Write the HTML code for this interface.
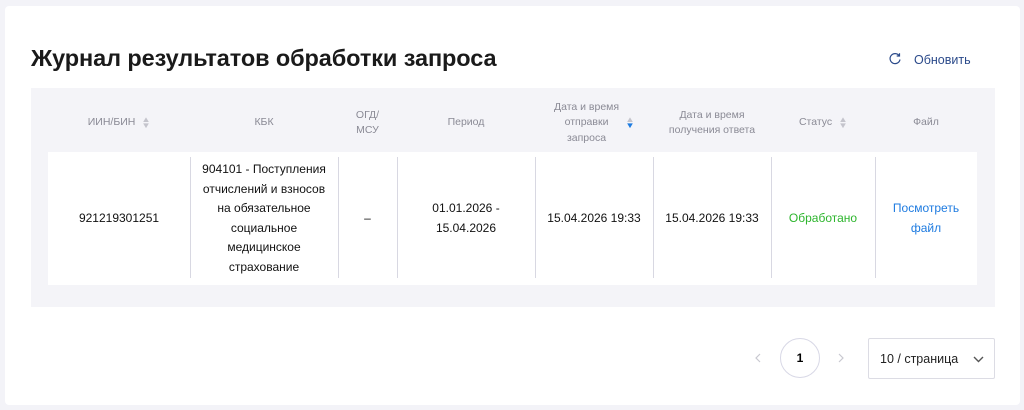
<!DOCTYPE html>
<html><head><meta charset="utf-8"><style>
*{margin:0;padding:0;box-sizing:border-box}
body{width:1024px;height:410px;background:#f3f3f8;font-family:"Liberation Sans",sans-serif;position:relative;overflow:hidden}
.card{position:absolute;left:5px;top:6px;width:1015px;height:399px;background:#fff;border-radius:4px}
h1{position:absolute;left:31px;top:45px;font-size:23.5px;font-weight:bold;color:#1a1a1a;letter-spacing:-0.1px}
.ref{position:absolute;left:888px;top:51px;font-size:12.5px;color:#2b4a8a}
.ref svg{position:absolute;left:0;top:1px}
.ref span{position:absolute;left:26px;top:2px;white-space:nowrap}
.tbl{position:absolute;left:31px;top:88px;width:964px;height:219px;background:#f4f4f8}
.row{position:absolute;left:48px;top:152px;width:929px;height:133px;background:#fff}
.c{position:absolute;text-align:center;display:flex;align-items:center;justify-content:center}
.h{font-size:10.5px;color:#8a8a95;line-height:15.5px;top:94px;height:58px}
.d{font-size:12px;color:#111;line-height:19.5px;top:152px;height:133px}
.div{position:absolute;top:157px;height:121px;width:1px;background:#d8d8e2}
.s{display:inline-block;margin-left:7px;font-size:8px;line-height:6px;color:#c4c4cc;transform:scaleX(1.2)}
.pg{position:absolute;top:338px;width:40px;height:40px;border:1px solid #d8d8e6;border-radius:50%;left:780px;font-size:12px;font-weight:bold;display:flex;align-items:center;justify-content:center}
.sel{position:absolute;left:868px;top:338px;width:127px;height:41px;border:1px solid #dcdce4;border-radius:2px;font-size:12.5px;color:#222;padding:13px 0 0 11px}
</style></head><body>
<div class="card"></div>
<h1>Журнал результатов обработки запроса</h1>
<div class="ref"><svg width="14" height="14" viewBox="0 0 14 14"><path d="M11.2 3.8A5 5 0 1 0 12 7.5" fill="none" stroke="#2b4a8a" stroke-width="1.2"/><path d="M11.5 1.2v2.8h-2.8" fill="none" stroke="#2b4a8a" stroke-width="1.2"/></svg><span>Обновить</span></div>
<div class="tbl"></div>
<div class="row"></div>
<div class="c h" style="left:48px;width:142px">ИИН/БИН<span class="s">▲<br>▼</span></div>
<div class="c h" style="left:190px;width:148px">КБК</div>
<div class="c h" style="left:338px;width:59px">ОГД/<br>МСУ</div>
<div class="c h" style="left:397px;width:138px">Период</div>
<div class="c h" style="left:535px;width:118px">Дата и время<br>отправки<br>запроса<span class="s" style="color:#c4c4cc">▲<br><b style="color:#1e7be0">▼</b></span></div>
<div class="c h" style="left:653px;width:118px">Дата и время<br>получения ответа</div>
<div class="c h" style="left:771px;width:104px">Статус<span class="s">▲<br>▼</span></div>
<div class="c h" style="left:875px;width:102px">Файл</div>
<div class="div" style="left:190px"></div><div class="div" style="left:338px"></div><div class="div" style="left:397px"></div><div class="div" style="left:535px"></div><div class="div" style="left:653px"></div><div class="div" style="left:771px"></div><div class="div" style="left:875px"></div>
<div class="c d" style="left:48px;width:142px">921219301251</div>
<div class="c d" style="left:190px;width:148px">904101 - Поступления<br>отчислений и взносов<br>на обязательное<br>социальное<br>медицинское<br>страхование</div>
<div class="c d" style="left:338px;width:59px">–</div>
<div class="c d" style="left:397px;width:138px">01.01.2026 -<br>15.04.2026</div>
<div class="c d" style="left:535px;width:118px">15.04.2026 19:33</div>
<div class="c d" style="left:653px;width:118px">15.04.2026 19:33</div>
<div class="c d" style="left:771px;width:104px;color:#2db52d">Обработано</div>
<div class="c d" style="left:875px;width:102px;color:#1e7be0">Посмотреть<br>файл</div>
<svg style="position:absolute;left:755px;top:353px" width="6" height="10" viewBox="0 0 6 10"><path d="M5 1L1 5l4 4" fill="none" stroke="#c8c8d0" stroke-width="1.2"/></svg>
<div class="pg">1</div>
<svg style="position:absolute;left:838px;top:353px" width="6" height="10" viewBox="0 0 6 10"><path d="M1 1l4 4-4 4" fill="none" stroke="#c8c8d0" stroke-width="1.2"/></svg>
<div class="sel">10 / страница<svg style="position:absolute;right:10px;top:17px" width="11" height="7" viewBox="0 0 11 7"><path d="M1 1l4.5 4.5L10 1" fill="none" stroke="#555" stroke-width="1.4"/></svg></div>
</body></html>
